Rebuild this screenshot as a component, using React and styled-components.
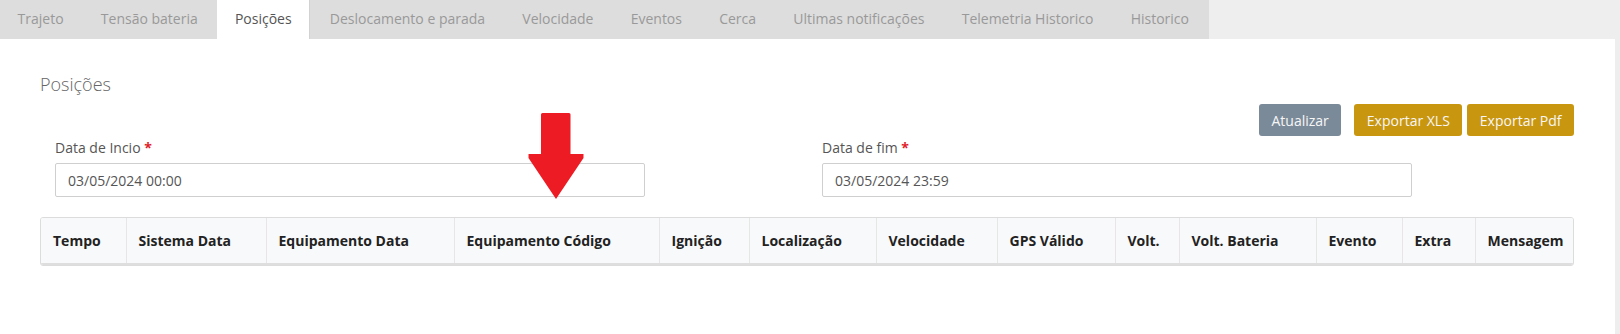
import React from "react";
import styled, { createGlobalStyle } from "styled-components";

const GlobalStyle = createGlobalStyle`
  *, *::before, *::after {
    box-sizing: border-box;
  }

  body {
    margin: 0;
    background: #eeeeee;
    font-family: "Open Sans", "Liberation Sans", sans-serif;
    font-size: 14px;
    color: #555;
  }
`;

const tabs = [
  "Trajeto",
  "Tensão bateria",
  "Posições",
  "Deslocamento e parada",
  "Velocidade",
  "Eventos",
  "Cerca",
  "Ultimas notificações",
  "Telemetria Historico",
  "Historico",
];

const columns = [
  { label: "Tempo", width: 85 },
  { label: "Sistema Data", width: 140 },
  { label: "Equipamento Data", width: 188 },
  { label: "Equipamento Código", width: 205 },
  { label: "Ignição", width: 90 },
  { label: "Localização", width: 127 },
  { label: "Velocidade", width: 121 },
  { label: "GPS Válido", width: 118 },
  { label: "Volt.", width: 64 },
  { label: "Volt. Bateria", width: 137 },
  { label: "Evento", width: 86 },
  { label: "Extra", width: 73 },
  { label: "Mensagem", width: 100 },
];

const Page = styled.div`
  min-height: 334px;
  display: flex;
  flex-direction: column;
`;

const TabBar = styled.nav`
  display: inline-flex;
  align-self: flex-start;
  height: 39px;
  background: #dddddd;
`;

const Tab = styled.a`
  display: flex;
  align-items: center;
  height: 39px;
  padding: 0 17.6px 3px;
  margin-right: 2px;
  white-space: nowrap;
  cursor: pointer;
  color: ${({ $active }) => ($active ? "#555" : "#999")};
  background: ${({ $active }) => ($active ? "#fff" : "transparent")};
  border-right: ${({ $active }) => ($active ? "1px solid #d2d2d2" : "0")};
`;

const Panel = styled.section`
  position: relative;
  flex: 1;
  margin-right: 5px;
  padding: 35px 41px 0 40px;
  background: #fff;
`;

const Title = styled.h3`
  margin: 0;
  font-size: 18px;
  line-height: 20px;
  font-weight: 300;
  color: #666;
`;

const Toolbar = styled.div`
  display: flex;
  justify-content: flex-end;
  margin-top: 10px;
`;

const Button = styled.button`
  height: 32px;
  padding: 0 12.5px;
  margin-left: ${({ $gap }) => $gap}px;
  border: 0;
  border-radius: 3px;
  font-family: inherit;
  font-size: 14px;
  color: #f6f6f6;
  cursor: pointer;
  background: ${({ $variant }) => ($variant === "export" ? "#c9960f" : "#7b8a99")};
`;

const FormRow = styled.div`
  display: grid;
  grid-template-columns: 590px 590px;
  column-gap: 177px;
  padding-left: 15px;
  margin-top: 2px;
`;

const Field = styled.div`
  display: flex;
  flex-direction: column;
`;

const Label = styled.label`
  line-height: 20px;
  margin-bottom: 5px;
  color: #555;

  span {
    color: #e11d2a;
    font-weight: 700;
  }
`;

const Input = styled.input`
  height: 34px;
  padding: 0 12px;
  border: 1px solid #cfcfcf;
  border-radius: 2px;
  font-family: inherit;
  font-size: 14px;
  color: #555;
  outline: none;
`;

const TableBox = styled.div`
  margin-top: 20px;
  border: 1px solid #dcdcdc;
  border-radius: 3px;
  overflow: hidden;
`;

const Table = styled.table`
  width: 100%;
  table-layout: fixed;
  border-collapse: collapse;
`;

const Th = styled.th`
  width: ${({ $w }) => $w}px;
  height: 46px;
  padding: 0 12px;
  text-align: left;
  font-size: 14px;
  font-weight: 700;
  color: #222;
  white-space: nowrap;
  background: #f8f9fa;
  border-right: 1px solid #e6e6e6;
  border-bottom: 2px solid #dedede;

  &:last-child {
    border-right: 0;
  }
`;

const Arrow = styled.svg`
  position: absolute;
  left: 528px;
  top: 74px;
  pointer-events: none;
`;

const DownArrow = () => (
  <Arrow width="56" height="86" viewBox="0 0 56 86">
    <path
      d="M13 1.5 Q13 0 14.5 0 H41 Q42.5 0 42.5 1.5 V41 H55.5 V45 L28 86 L0.5 45 V41 H13 Z"
      fill="#ed1c24"
    />
  </Arrow>
);

export default function App() {
  return (
    <>
      <GlobalStyle />
      <Page>
        <TabBar>
          {tabs.map((t) => (
            <Tab key={t} $active={t === "Posições"}>
              {t}
            </Tab>
          ))}
        </TabBar>

        <Panel>
          <Title>Posições</Title>

          <Toolbar>
            <Button $gap={0}>Atualizar</Button>
            <Button $variant="export" $gap={13}>Exportar XLS</Button>
            <Button $variant="export" $gap={5}>Exportar Pdf</Button>
          </Toolbar>

          <FormRow>
            <Field>
              <Label>
                Data de Incio <span>*</span>
              </Label>
              <Input readOnly value="03/05/2024 00:00" />
            </Field>
            <Field>
              <Label>
                Data de fim <span>*</span>
              </Label>
              <Input readOnly value="03/05/2024 23:59" />
            </Field>
          </FormRow>

          <TableBox>
            <Table>
              <thead>
                <tr>
                  {columns.map((c) => (
                    <Th key={c.label} $w={c.width}>
                      {c.label}
                    </Th>
                  ))}
                </tr>
              </thead>
            </Table>
          </TableBox>

          <DownArrow />
        </Panel>
      </Page>
    </>
  );
}
